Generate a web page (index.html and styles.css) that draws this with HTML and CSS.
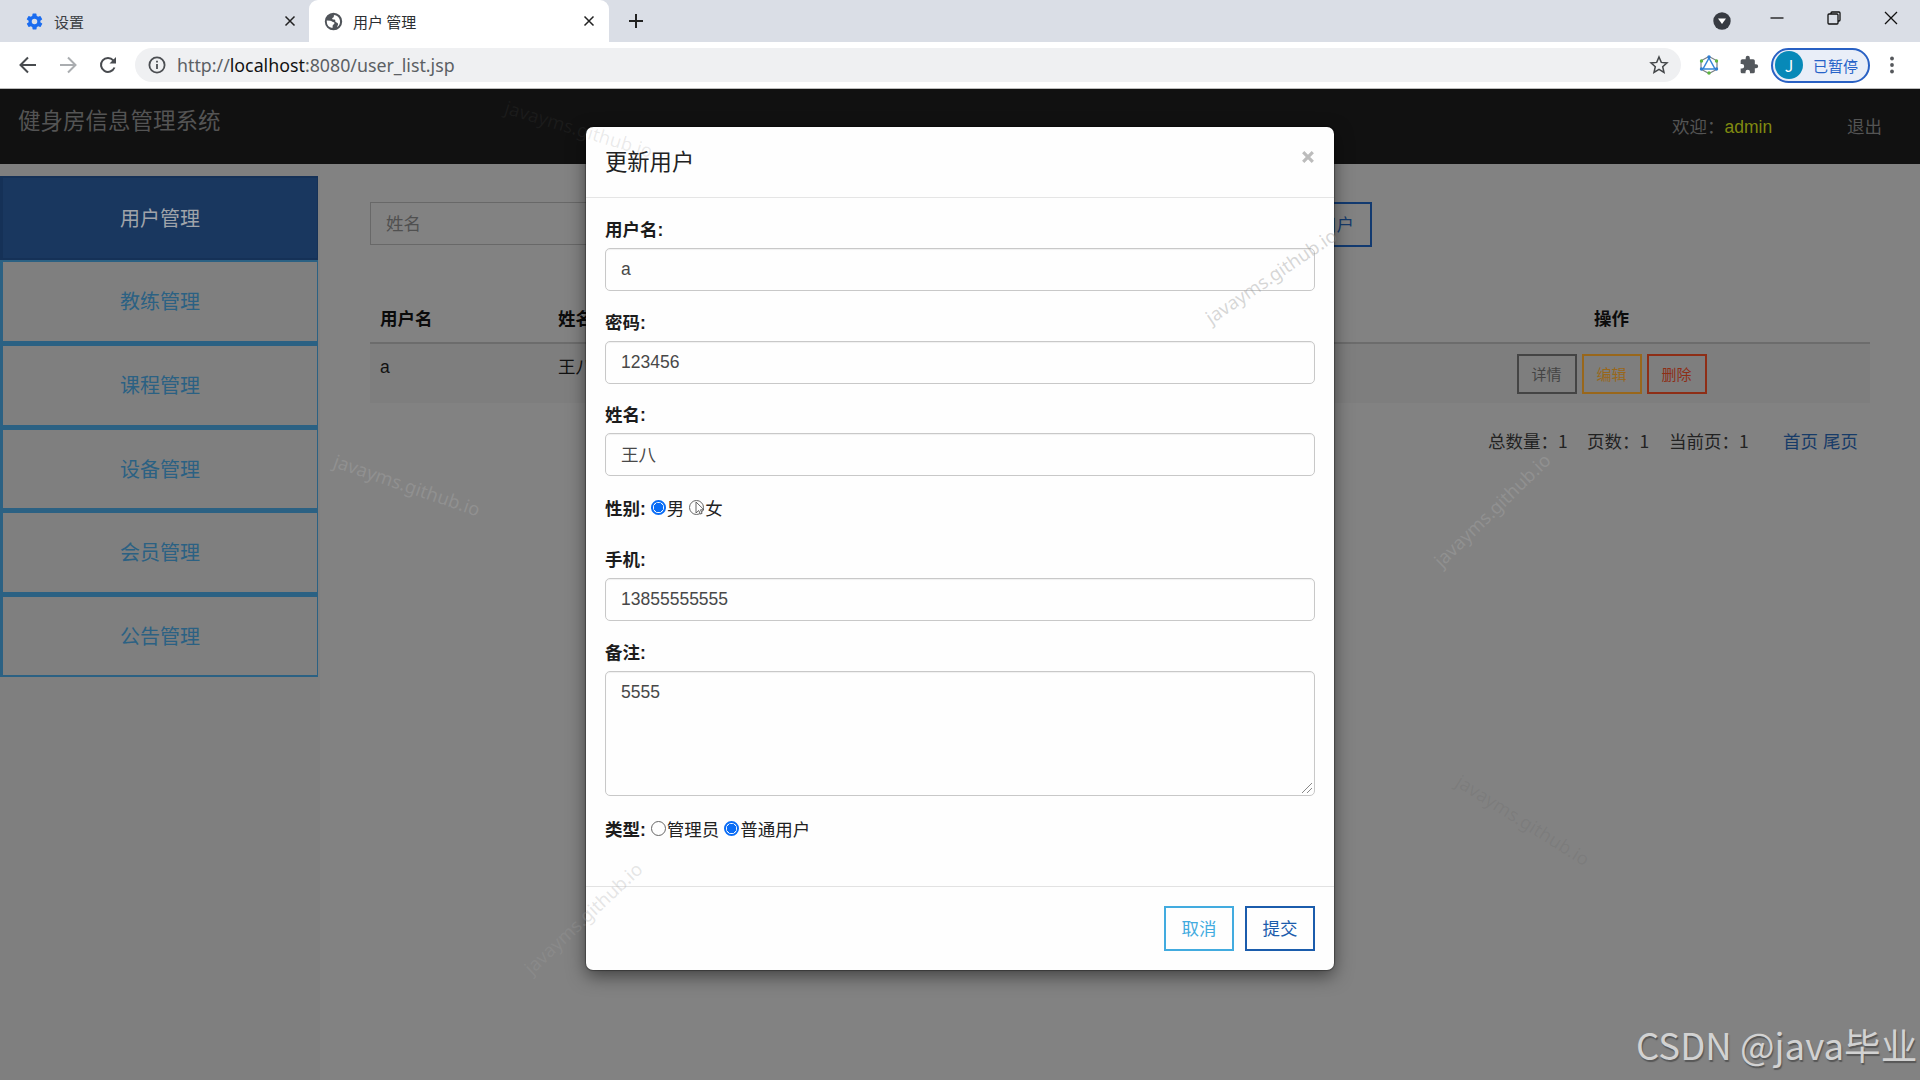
FILE: index.html
```html
<!DOCTYPE html>
<html lang="zh-CN">
<head>
<meta charset="utf-8">
<title>用户 管理</title>
<link rel="stylesheet" href="styles.css">
</head>
<body>
<div class="screen">
  <div class="tabstrip">
    <div class="tab">
      <svg class="fav" viewBox="0 0 24 24"><path fill="#1a6cf0" d="M19.4 13a7.500 7.500 0 0 0 0-2l2.100-1.650a.5.5 0 0 0 .12-.64l-2-3.460a.5.5 0 0 0-.6-.22l-2.500 1a7.300 7.300 0 0 0-1.700-1l-.38-2.650A.5.5 0 0 0 14 2h-4a.5.5 0 0 0-.5.42l-.38 2.650a7.700 7.700 0 0 0-1.700 1l-2.500-1a.5.5 0 0 0-.6.22l-2 3.460a.5.5 0 0 0 .12.64L4.600 11a7.500 7.500 0 0 0 0 2l-2.100 1.650a.5.5 0 0 0-.12.64l2 3.460a.5.5 0 0 0 .6.22l2.500-1a7.300 7.300 0 0 0 1.700 1l.38 2.650a.5.5 0 0 0 .5.42h4a.5.5 0 0 0 .5-.42l.38-2.650a7.700 7.700 0 0 0 1.700-1l2.500 1a.5.5 0 0 0 .6-.22l2-3.460a.5.5 0 0 0-.12-.64zM12 15.500a3.500 3.500 0 1 1 0-7 3.500 3.500 0 0 1 0 7z"/></svg>
      <span class="tab-title">设置</span>
      <svg class="tab-x" viewBox="0 0 12 12"><path d="M1.500 1.500l9 9m0-9l-9 9"/></svg>
    </div>
    <div class="tab active">
      <svg class="fav" viewBox="0 0 24 24"><path fill="#50545a" d="M12 1a11 11 0 1 0 0 22 11 11 0 0 0 0-22zM3.500 12c0-.4 0-.8.1-1.200L8 11c1.500 0 2 1.500 3.500 1.700 1.600.2 2 .8 1.500 2-.4 1-1.800 1-2 2.300l-.3 3.300A8.500 8.500 0 0 1 3.500 12zm13 7.200c.2-2.200 1.500-2.800 1.200-4.200-.3-1.600-2.200-1.200-3.200-2.600-.8-1.200.3-2-.6-2.600-1.400-.8-3.400.2-3.600-1.300-.2-1.300 1.500-1.100 2-2.200.3-.8 0-1.900.3-2.600A8.500 8.500 0 0 1 16.500 19.200z"/></svg>
      <span class="tab-title">用户 管理</span>
      <svg class="tab-x" viewBox="0 0 12 12"><path d="M1.500 1.500l9 9m0-9l-9 9"/></svg>
    </div>
    <svg class="newtab" viewBox="0 0 16 16"><path d="M8 1v14M1 8h14"/></svg>
    <div class="winctl">
      <svg width="18" height="18" viewBox="0 0 18 18" class="drop"><circle cx="9" cy="9" r="8.700" fill="#373b42"/><path d="M5 6.500h8L9 12z" fill="#fff"/></svg>
      <svg width="14" height="14" viewBox="0 0 14 14"><path d="M.5 7h13"/></svg>
      <svg width="14" height="14" viewBox="0 0 14 14"><path d="M1 4a1 1 0 0 1 1-1h8a1 1 0 0 1 1 1v8a1 1 0 0 1-1 1H2a1 1 0 0 1-1-1zM4 2.800V2a1 1 0 0 1 1-1h7a1 1 0 0 1 1 1v7a1 1 0 0 1-1 1h-.8"/></svg>
      <svg width="14" height="14" viewBox="0 0 14 14"><path d="M1 1l12 12M13 1L1 13"/></svg>
    </div>
  </div>

  <div class="toolbar">
    <svg class="nav" viewBox="0 0 18 18"><path d="M17 9H2M9 1.500L1.500 9 9 16.500"/></svg>
    <svg class="nav off" viewBox="0 0 18 18"><path d="M1 9h15M9 1.500L16.500 9 9 16.500"/></svg>
    <svg class="nav" viewBox="0 0 18 18"><path d="M15.500 11.500A7 7 0 1 1 14.300 4.300L16 6"/><path class="solid" d="M17 1v6.500h-6.500z"/></svg>
    <div class="omnibox">
      <svg class="info" viewBox="0 0 18 18"><circle cx="9" cy="9" r="7.600"/><path d="M9 8v5M9 4.800v1.700"/></svg>
      <span class="url">http://<b>localhost</b>:8080/user_list.jsp</span>
      <svg class="star" viewBox="0 0 20 20"><path d="M10 2l2.300 5.400 5.700.5-4.300 3.800 1.300 5.700-5-3-5 3 1.300-5.700L2 7.900l5.700-.5z"/></svg>
    </div>
    <svg class="ext" viewBox="0 0 20 20"><path d="M10 1.500l8 4.300v8.400l-8 4.300-8-4.300V5.800z" fill="none" stroke="#7a8086" stroke-width="1.200"/><path d="M10 3L4 14h12z" fill="none" stroke="#3585d8" stroke-width="1.500"/><g fill="#2d7dd2"><circle cx="10" cy="2" r="1.700"/><circle cx="2.500" cy="14" r="1.700"/><circle cx="17.500" cy="14" r="1.700"/></g><g fill="#5cb53f"><circle cx="2.500" cy="6" r="1.700"/><circle cx="17.500" cy="6" r="1.700"/><circle cx="10" cy="18" r="1.700"/></g></svg>
    <svg class="puzzle" viewBox="0 0 24 24"><path fill="#54585d" d="M20.500 11H19V7a2 2 0 0 0-2-2h-4V3.500a2.500 2.500 0 0 0-5 0V5H4a2 2 0 0 0-2 2v3.800h1.500a2.700 2.700 0 0 1 0 5.400H2V20c0 1.100.9 2 2 2h3.800v-1.500a2.700 2.700 0 0 1 5.400 0V22H17a2 2 0 0 0 2-2v-4h1.500a2.500 2.500 0 0 0 0-5z"/></svg>
    <div class="profile"><span class="avatar">J</span><span>已暂停</span></div>
    <svg class="dots" viewBox="0 0 4 18"><circle cx="2" cy="2.500" r="1.900"/><circle cx="2" cy="9" r="1.900"/><circle cx="2" cy="15.500" r="1.900"/></svg>
  </div>

  <div class="navbar">
    <span class="brand">健身房信息管理系统</span>
    <span class="welcome">欢迎：<em>admin</em></span>
    <span class="logout">退出</span>
  </div>

  <div class="page">
    <div class="sidebar">
      <a class="item current">用户管理</a>
      <a class="item">教练管理</a>
      <a class="item">课程管理</a>
      <a class="item">设备管理</a>
      <a class="item">会员管理</a>
      <a class="item">公告管理</a>
    </div>
    <div class="main">
      <div class="search">
        <div class="search-box">姓名</div>
        <div class="add">添加用户</div>
      </div>
      <div class="row head"><span>用户名</span><span>姓名</span><span class="ops">操作</span></div>
      <div class="row data"><span>a</span><span>王八</span>
        <span class="ops"><i class="btn-s detail">详情</i><i class="btn-s edit">编辑</i><i class="btn-s del">删除</i></span></div>
      <div class="pager"><span class="p1">总数量：1</span><span class="p2">页数：1</span><span class="p3">当前页：1</span><a>首页</a><a>尾页</a></div>
    </div>
  </div>

  <div class="overlay">
    <div class="modal">
      <div class="modal-head"><span>更新用户</span>
        <svg class="close" viewBox="0 0 12 12"><path d="M1.200 1.200l9.600 9.600m0-9.600l-9.600 9.600"/></svg></div>
      <div class="modal-body">
        <div class="field"><label>用户名:</label><div class="control">a</div></div>
        <div class="field"><label>密码:</label><div class="control">123456</div></div>
        <div class="field"><label>姓名:</label><div class="control cjk">王八</div></div>
        <div class="choices"><label>性别:</label><i class="radio on"></i><span>男</span><i class="radio"></i><span>女</span></div>
        <div class="field"><label>手机:</label><div class="control">13855555555</div></div>
        <div class="field"><label>备注:</label><div class="control area">5555
          <svg class="grip" viewBox="0 0 12 12"><path d="M1 11L11 1M6 11l5-5"/></svg></div></div>
        <div class="choices last"><label>类型:</label><i class="radio"></i><span>管理员</span><i class="radio on"></i><span>普通用户</span></div>
      </div>
      <div class="modal-foot"><span class="btn cancel">取消</span><span class="btn submit">提交</span></div>
    </div>
  </div>

  <svg class="pointer" viewBox="0 0 10 14"><path d="M1 1v11l2.700-2.500 1.700 3.600 1.700-.8L5.500 8.800H9z"/></svg>
  <span class="mark m1">javayms.github.io</span>
  <span class="mark m2">javayms.github.io</span>
  <span class="mark m3">javayms.github.io</span>
  <span class="mark m4">javayms.github.io</span>
  <span class="mark m5">javayms.github.io</span>
  <span class="mark m6">javayms.github.io</span>
  <span class="credit">CSDN @java毕业</span>
</div>
</body>
</html>
```

FILE: styles.css
```css
* { box-sizing: border-box; }
body { margin: 0; font-family: "Liberation Sans", "Noto Sans CJK SC", sans-serif; font-size: 17.5px; color: #222; }
i, em { font-style: normal; }
svg { flex: none; display: block; }
.screen { position: relative; width: 1920px; height: 1080px; overflow: hidden; background: #828282; }

/* browser tabs */
.tabstrip { height: 42px; background: #dadee6; display: flex; font-family: "Noto Sans CJK SC", sans-serif; font-size: 15px; }
.tab { display: flex; align-items: center; width: 309px; padding: 0 13px 0 25px; color: #3c4043; }
.tab.active { width: 300px; padding: 0 14px 0 15px; background: #fff; border-radius: 9px 9px 0 0; color: #2b2e31; }
.fav { width: 19px; height: 19px; }
.tab-title { flex: 1; margin-left: 10px; line-height: 43px; }
.tab-x { width: 12px; height: 12px; fill: none; stroke: #222; stroke-width: 1.500; }
.newtab { width: 16px; height: 16px; margin: 13px 0 0 19px; fill: none; stroke: #222; stroke-width: 2; }
.winctl { margin-left: auto; display: flex; gap: 43px; padding: 11px 22px 0 0; fill: none; stroke: #111; stroke-width: 1.300; }
.winctl .drop { stroke: none; margin: 1px -4px 0 0; }

/* address row */
.toolbar { height: 47px; background: #fff; border-bottom: 1px solid #bbb; display: flex; align-items: center; padding-left: 19px; }
.nav { width: 18px; height: 18px; margin-right: 22px; fill: none; stroke: #484b4f; stroke-width: 2; }
.nav.off { stroke: #aaadb0; }
.nav + .nav + .nav { margin-right: 18px; }
.nav .solid { fill: #484b4f; stroke: none; }
.omnibox { width: 1546px; height: 34px; border-radius: 17px; background: #eff0f2; display: flex; align-items: center; padding: 0 12px 0 13px; }
.info { width: 18px; height: 18px; fill: none; stroke: #4b4e52; stroke-width: 1.800; }
.url { font-family: "Noto Sans", sans-serif; font-size: 17.8px; color: #5c6064; margin-left: 11px; flex: 1; white-space: nowrap; }
.url b { font-weight: 400; color: #111; }
.star { width: 20px; height: 20px; fill: none; stroke: #44474a; stroke-width: 1.500; }
.ext { width: 20px; height: 20px; margin-left: 18px; }
.puzzle { width: 20px; height: 20px; margin-left: 20px; }
.profile { margin-left: 12px; width: 99px; height: 35px; border: 2px solid #2961c4; border-radius: 18px; background: #e9eef8; display: flex; align-items: center; padding-left: 2px; font: 15px "Noto Sans CJK SC", sans-serif; color: #2562c8; white-space: nowrap; }
.avatar { width: 28px; height: 28px; border-radius: 50%; background: #0789b8; color: #fff; text-align: center; line-height: 28px; margin-right: 10px; font-size: 16px; }
.dots { width: 4px; height: 18px; margin-left: 20px; fill: #55585c; }

/* application bar */
.navbar { height: 75px; background: #111; display: flex; padding-left: 18px; color: #545454; line-height: 30px; }
.brand { font-size: 22.500px; padding-top: 18px; width: 1654px; }
.welcome { padding-top: 23px; width: 175px; }
.welcome em { color: #808a10; }
.logout { padding-top: 23px; }

.page { display: flex; height: 916px; }
.sidebar { width: 320px; padding: 12px 2px 0 0; background: #7f7f7f; }
.item { display: flex; align-items: center; justify-content: center; height: 83.500px; border: 2px solid #2b6183; border-left-width: 3px; border-right-width: 1px; font-size: 20px; color: #2b6183; padding-bottom: 1px; }
.item.current { background: #19375f; border-color: #153157; color: #a0a4aa; }
.item:nth-child(n+3) { border-top-width: 3px; }

.main { padding: 37px 50px 0; width: 1600px; }
.search { display: flex; justify-content: space-between; width: 1002px; padding-top: 1px; }
.search-box { width: 420px; height: 43px; border: 1px solid #686868; line-height: 42px; padding-left: 15px; color: #505050; }
.add { height: 45px; border: 2px solid #123a70; line-height: 42px; padding: 0 16px; color: #153a6b; }
.row { display: grid; grid-template-columns: 178px 891px 1fr; padding-left: 10px; color: #111; }
.head { margin-top: 47px; height: 50px; line-height: 51px; border-bottom: 2px solid #6c6c6c; font-weight: 700; color: #0b0b0b; }
.data { height: 59px; background: #7e7e7e; line-height: 46px; }
.ops { display: flex; justify-content: center; gap: 5px; padding-right: 96px; }
.btn-s { margin-top: 10px; width: 60px; height: 40px; border: 2px solid; line-height: 37px; text-align: center; font-size: 15px; }
.detail { color: #444; }
.edit { color: #99671b; }
.del { color: #8e2e16; }
.pager { display: flex; margin: 22px 12px 0 0; justify-content: flex-end; line-height: 32px; font-family: "Noto Sans CJK SC", sans-serif; white-space: nowrap; }
.p1 { width: 99px; } .p2 { width: 82px; } .p3 { width: 114px; }
.pager a { color: #173b68; margin-left: 5px; }
.p3 + a { margin-left: 0; }

/* dialog */
.overlay { position: absolute; inset: 0; display: flex; justify-content: center; align-items: flex-start; padding-top: 127px; }
.modal { width: 748px; height: 843px; background: #fefefe; border-radius: 7px; box-shadow: 0 6px 18px rgba(0,0,0,.5), 0 0 1px 1px rgba(0,0,0,.3); display: flex; flex-direction: column; }
.modal-head { height: 71px; border-bottom: 1px solid #e5e5e5; display: flex; justify-content: space-between; padding: 0 20px 0 19px; font-size: 22.3px; line-height: 71px; }
.close { width: 12px; height: 12px; margin-top: 24px; stroke: #bcbcbc; stroke-width: 3.200; }
.modal-body { padding: 19px 19px 0; flex: 1; }
.modal-body label { font-weight: 700; color: #1c1c1c; }
.field { margin-bottom: 18.600px; }
.field label { display: block; height: 31px; line-height: 26px; }
.control { height: 43px; border: 1px solid #c8c8c8; border-radius: 5px; padding-left: 15px; line-height: 41px; color: #484848; box-shadow: inset 0 1px 1px rgba(0,0,0,.06); }
.control.cjk { line-height: 43px; }
.area { height: 125px; position: relative; }
.grip { position: absolute; right: 1px; bottom: 1px; width: 12px; height: 12px; stroke: #888; fill: none; }
.choices { display: flex; height: 52.500px; line-height: 29px; }
.choices.last { padding-top: 1px; line-height: 31px; }
.radio { width: 15px; height: 15px; border: 1.300px solid #666; border-radius: 50%; margin: 5px 1px 0 5px; }
.last .radio { margin-top: 6px; }
.radio.on { border: 2px solid #0a6cf5; background: radial-gradient(#0a6cf5 0 4.500px, #fff 5px); }
.modal-foot { height: 84px; border-top: 1px solid #e2e2e2; display: flex; justify-content: flex-end; gap: 11px; padding: 19px 19px 0; }
.btn { width: 70px; height: 45px; border: 2px solid; text-align: center; line-height: 42px; }
.cancel { color: #42abdf; }
.submit { color: #1b5cac; }

.pointer { position: absolute; left: 695px; top: 501px; width: 10px; height: 14px; fill: #fff; stroke: #555; stroke-width: .9; }
.mark { position: absolute; font: 18.500px/24px "Noto Sans", sans-serif; width: 160px; text-align: center; white-space: nowrap; color: rgba(180,180,180,.3); }
.m1 { left: 499px; top: 117px; transform: rotate(17deg); color: rgba(100,100,100,.13); }
.m2 { left: 327px; top: 473px; transform: rotate(19deg); }
.m3 { left: 1191px; top: 264px; transform: rotate(-34deg); color: rgba(140,140,140,.35); }
.m4 { left: 1412px; top: 498px; transform: rotate(-44deg); }
.m5 { left: 1443px; top: 808px; transform: rotate(32deg); color: rgba(70,70,70,.1); }
.m6 { left: 503px; top: 906px; transform: rotate(-43deg); color: rgba(160,160,160,.27); }
.credit { position: absolute; left: 1636px; top: 1018px; font: 36.600px/54px "Noto Sans CJK SC", sans-serif; color: #d2d2d2; text-shadow: 1px 2px 1px rgba(60,60,60,.6); white-space: nowrap; }
```
